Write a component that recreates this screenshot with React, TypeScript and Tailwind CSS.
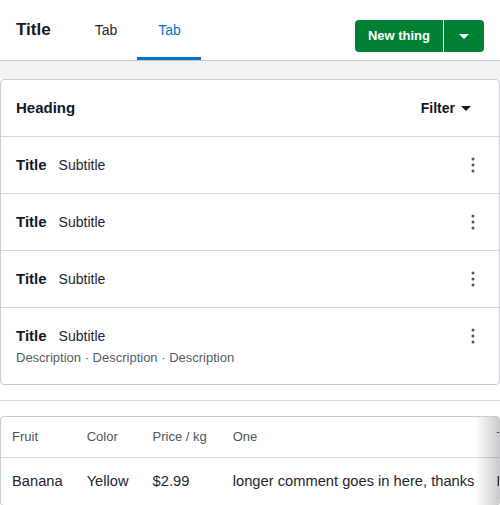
import React from "react"

const rows = [
  { title: "Title", subtitle: "Subtitle" },
  { title: "Title", subtitle: "Subtitle" },
  { title: "Title", subtitle: "Subtitle" },
  { title: "Title", subtitle: "Subtitle", description: "Description · Description · Description" },
]

function Caret({ className }: { className?: string }) {
  return (
    <svg width="10" height="5" viewBox="0 0 10 5" className={className}>
      <path d="M0 0h10L5 5z" fill="currentColor" />
    </svg>
  )
}

function Kebab() {
  return (
    <svg width="4" height="16" viewBox="0 0 4 16" className="text-[#4b5563]">
      <circle cx="2" cy="2" r="1.5" fill="currentColor" />
      <circle cx="2" cy="8" r="1.5" fill="currentColor" />
      <circle cx="2" cy="14" r="1.5" fill="currentColor" />
    </svg>
  )
}

export default function App() {
  return (
    <div className="w-[500px] h-[505px] overflow-hidden bg-white text-[#111827] font-['Liberation_Sans',Arial,sans-serif]">
      {/* Top bar */}
      <div className="flex h-[61px] border-b border-[#c4c6cb] pl-4 pr-4">
        <div className="flex items-center text-[17px] font-bold pb-px">Title</div>
        <div className="flex ml-6">
          <div className="flex items-center px-5 text-[14px] text-[#1f2937] pt-[3px] border-b-[3px] border-transparent">Tab</div>
          <div className="flex items-center pl-[21px] pr-5 text-[14px] text-[#0077cc] pt-[3px] border-b-[3px] border-[#0077cc]">Tab</div>
        </div>
        <div className="ml-auto mt-5 flex self-start h-8 rounded-[4px] bg-[#008035] text-white">
          <button className="px-[13px] text-[13px] font-bold">New thing</button>
          <div className="w-px bg-[#e6f2ea]" />
          <button className="w-10 flex items-center justify-center">
            <Caret />
          </button>
        </div>
      </div>

      {/* Gray band */}
      <div className="h-[18px] bg-[#f1f2f4]" />

      {/* List card */}
      <div className="border border-[#c9cbcf] rounded-[4px] bg-white">
        <div className="flex items-center h-[57px] pl-[15px] pr-7 border-b border-[#d4d6d9]">
          <span className="text-[15px] font-bold pt-px">Heading</span>
          <button className="ml-auto flex items-center gap-[6px] text-[14px] font-bold pt-px">
            Filter
            <Caret />
          </button>
        </div>
        {rows.map((r, i) => (
          <div
            key={i}
            className={`flex items-start pl-[15px] pr-[24px] pt-[18px] ${i < rows.length - 1 ? "pb-[18px] border-b border-[#d4d6d9]" : "pb-[17px]"}`}
          >
            <div className="flex-1">
              <div className="flex items-center gap-3 leading-5">
                <span className="text-[15px] font-bold">{r.title}</span>
                <span className="text-[14px] text-[#1f2430]">{r.subtitle}</span>
              </div>
              {r.description && (
                <div className="mt-[3px] text-[13px] leading-[18px] text-[#555b67]">{r.description}</div>
              )}
            </div>
            <div className="pt-[2px]">
              <Kebab />
            </div>
          </div>
        ))}
      </div>

      {/* Separator */}
      <div className="h-[15px]" />
      <div className="border-t border-[#d4d6d9]" />
      <div className="h-[15px]" />

      {/* Table */}
      <div className="relative border border-[#c9cbcf] rounded-[4px] overflow-hidden">
        <table className="border-collapse whitespace-nowrap">
          <thead>
            <tr className="h-10 border-b border-[#d4d6d9] text-[13px] text-[#4b5563]">
              <th className="pl-[11px] pr-3 text-left font-normal">Fruit</th>
              <th className="px-3 text-left font-normal">Color</th>
              <th className="pl-3 pr-[14px] text-left font-normal">Price / kg</th>
              <th className="pl-3 pr-[10px] text-left font-normal">One</th>
              <th className="px-3 text-left font-normal">Thing</th>
            </tr>
          </thead>
          <tbody>
            <tr className="h-12 text-[14.7px] text-[#1f2430]">
              <td className="pl-[11px] pr-3">Banana</td>
              <td className="px-3">Yellow</td>
              <td className="pl-3 pr-[14px]">$2.99</td>
              <td className="pl-3 pr-[10px]">longer comment goes in here, thanks</td>
              <td className="px-3">Lorem</td>
            </tr>
          </tbody>
        </table>
        <div className="absolute right-0 top-0 bottom-0 w-6 bg-gradient-to-r from-transparent to-black/20" />
      </div>
    </div>
  )
}
